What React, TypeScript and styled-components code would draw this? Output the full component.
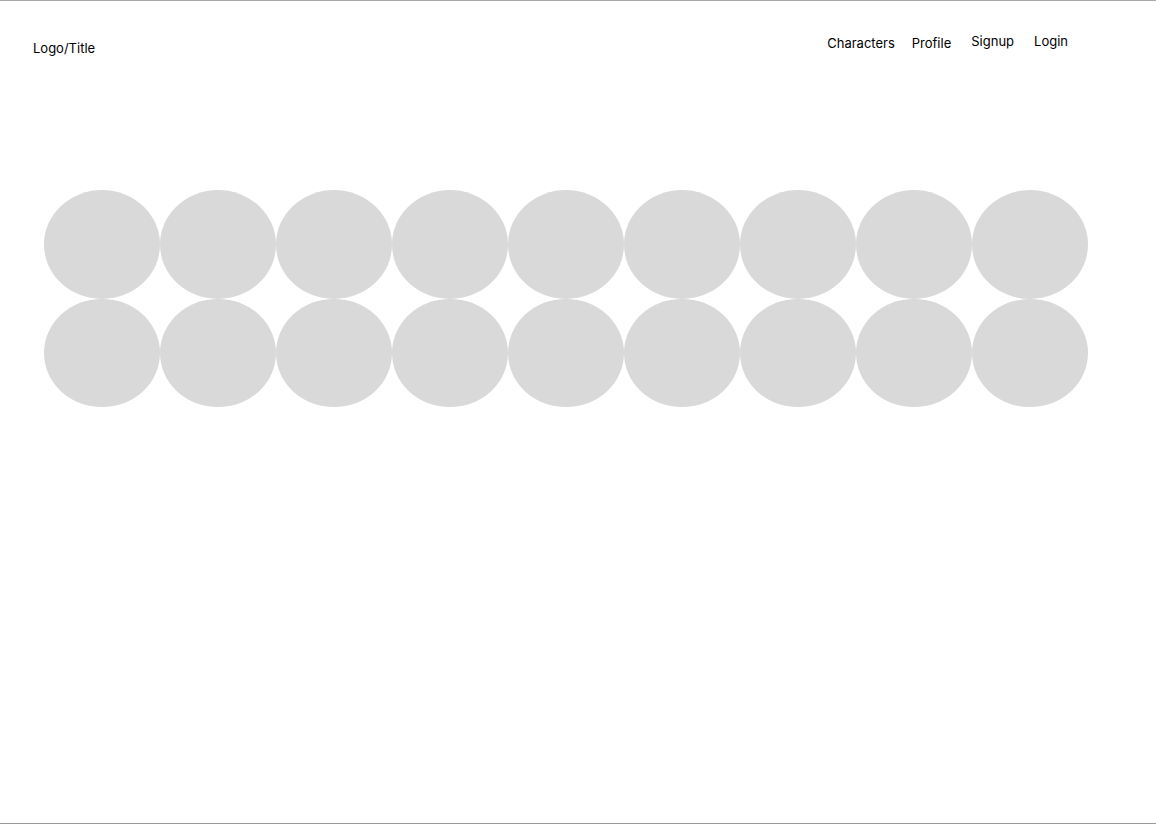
import React from "react";
import styled, { createGlobalStyle } from "styled-components";

const GlobalStyle = createGlobalStyle`
  html, body {
    margin: 0;
    padding: 0;
    background: #ffffff;
  }
  body {
    font-family: Inter, "Noto Sans", sans-serif;
    color: #000000;
  }
`;

const StyledPage = styled("div")`
  box-sizing: border-box;
  width: 1156px;
  height: 824px;
  border-top: 1px solid #a8a8a8;
  border-bottom: 1px solid #999999;
  display: flex;
  flex-direction: column;
`;

const StyledHeader = styled("header")`
  display: flex;
  justify-content: space-between;
  align-items: flex-start;
  padding: 0 88px 0 33px;
`;

const StyledLogo = styled("div")`
  font-size: 13px;
  line-height: 17px;
  margin-top: 39px;
`;

const StyledNav = styled("nav")`
  display: flex;
  align-items: flex-start;
  margin-top: 34px;
`;

const StyledNavLink = styled("a")<{ $lift?: number; $space?: number }>`
  font-size: 13px;
  line-height: 17px;
  color: #000000;
  text-decoration: none;
  margin-top: ${(p) => -(p.$lift || 0)}px;
  margin-left: ${(p) => p.$space || 0}px;
  cursor: pointer;
`;

const StyledGrid = styled("div")`
  display: grid;
  grid-template-columns: repeat(9, 116px);
  grid-auto-rows: 108.5px;
  margin: 133px 0 0 44px;
`;

const StyledCircle = styled("div")`
  background-color: #d9d9d9;
  border-radius: 50%;
`;

const links = [
  { label: "Characters", lift: 0, space: 0 },
  { label: "Profile", lift: 0, space: 17 },
  { label: "Signup", lift: 2, space: 20 },
  { label: "Login", lift: 2, space: 20 },
];

const App = () => {
  return (
    <>
      <GlobalStyle />
      <StyledPage>
        <StyledHeader>
          <StyledLogo>Logo/Title</StyledLogo>
          <StyledNav>
            {links.map((l) => (
              <StyledNavLink key={l.label} $lift={l.lift} $space={l.space}>
                {l.label}
              </StyledNavLink>
            ))}
          </StyledNav>
        </StyledHeader>
        <StyledGrid>
          {Array.from({ length: 18 }).map((_, i) => (
            <StyledCircle key={i} />
          ))}
        </StyledGrid>
      </StyledPage>
    </>
  );
};

export default App;
